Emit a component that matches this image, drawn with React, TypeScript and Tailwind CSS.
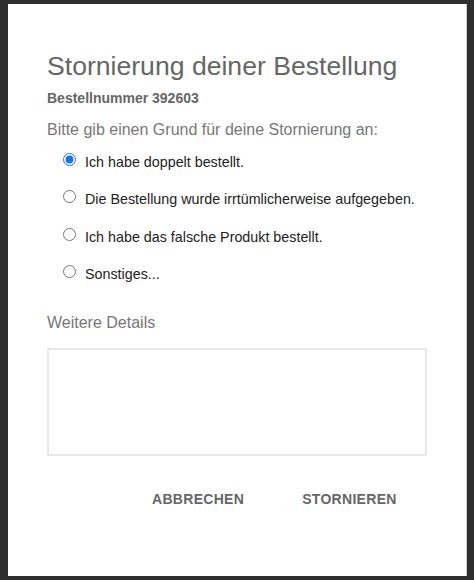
import React from 'react';

const reasons = [
  'Ich habe doppelt bestellt.',
  'Die Bestellung wurde irrtümlicherweise aufgegeben.',
  'Ich habe das falsche Produkt bestellt.',
  'Sonstiges...',
];

export default function App() {
  return (
    <div
      className="w-[474px] h-[580px] bg-[#2e2e2e] pt-[4px] pb-[4px] pl-[8px] pr-[7px]"
      style={{ fontFamily: '"Liberation Sans", Arial, sans-serif' }}
    >
      <div className="h-full bg-white border-r border-[#cfcfcf] pl-[39px] pr-[38px] pt-[44px]">
        <h1 className="text-[26.6px] leading-[36px] text-[#666666] whitespace-nowrap">Stornierung deiner Bestellung</h1>
        <div className="mt-[4px] text-[14px] leading-[20px] font-bold text-[#666666]">Bestellnummer 392603</div>
        <div className="mt-[11px] text-[16px] leading-[22px] text-[#777777]">
          Bitte gib einen Grund für deine Stornierung an:
        </div>
        <div className="mt-[5px] pl-[16px] flex flex-col">
          {reasons.map((r, i) => (
            <label key={r} className="flex items-start h-[37.3px] pt-[6px]">
              <input
                type="radio"
                name="reason"
                defaultChecked={i === 0}
                className="m-0 mt-[1px] w-[13px] h-[13px] accent-[#1a73e8]"
              />
              <span className="ml-[9px] text-[14.3px] leading-[20px] text-[#222222] whitespace-nowrap">{r}</span>
            </label>
          ))}
        </div>
        <div className="mt-[17px] text-[16px] leading-[22px] text-[#777777]">Weitere Details</div>
        <textarea className="mt-[14px] block w-[380px] h-[108px] border-2 border-[#e8e8e8] resize-none outline-none" />
        <div className="mt-[33px] flex pl-[105px] gap-[58px]">
          <button className="text-[14px] font-bold tracking-[0.3px] text-[#666666]">ABBRECHEN</button>
          <button className="text-[14px] font-bold tracking-[0.3px] text-[#666666]">STORNIEREN</button>
        </div>
      </div>
    </div>
  );
}
